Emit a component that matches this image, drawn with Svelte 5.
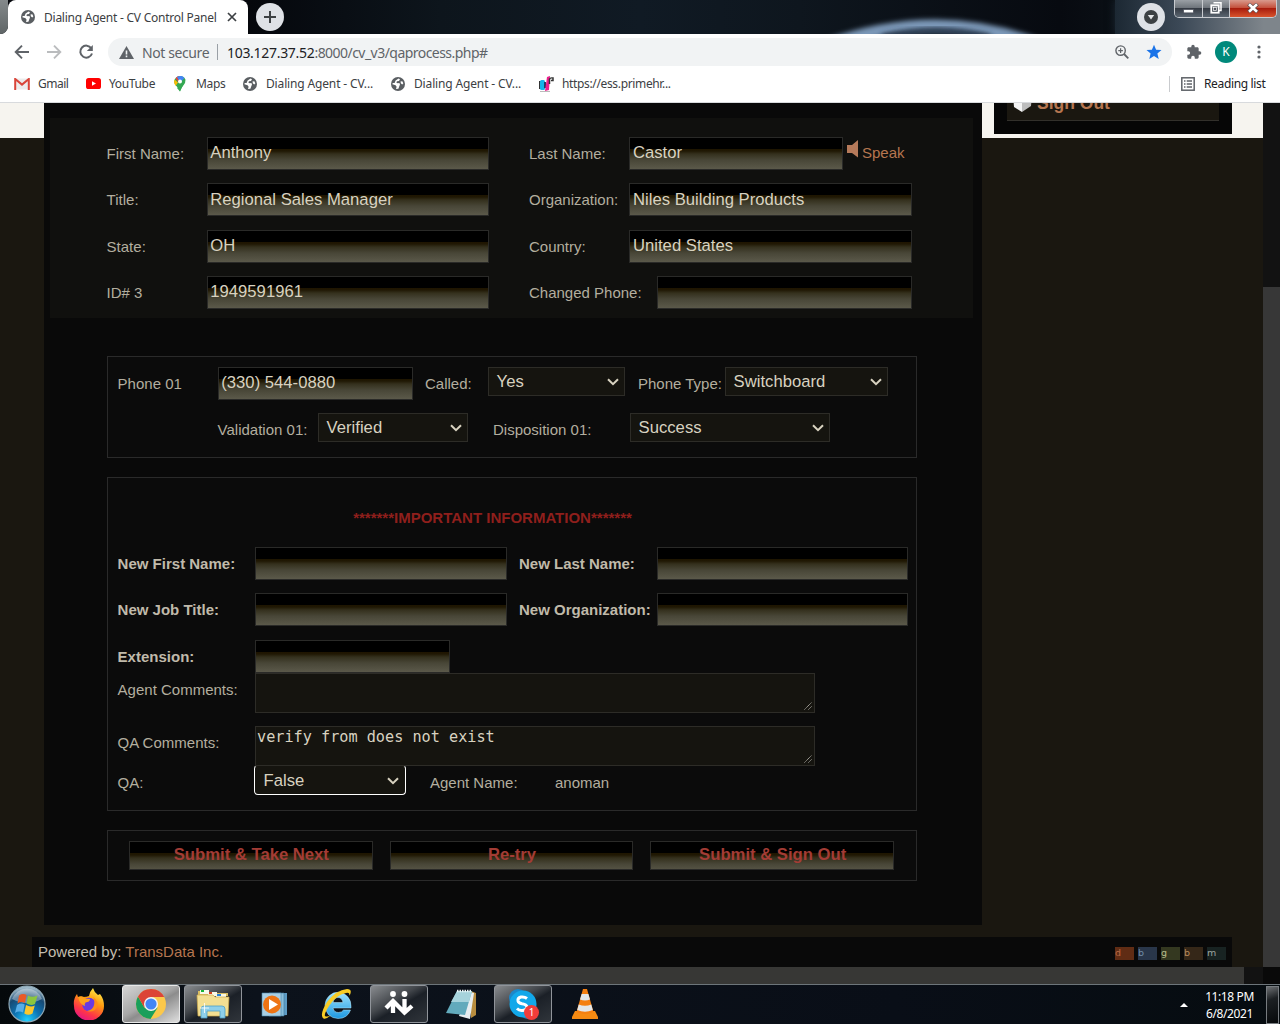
<script>
  const swatches = [
    { key: 'd', cls: 'sw-d' },
    { key: 'b', cls: 'sw-b' },
    { key: 'g', cls: 'sw-g' },
    { key: 'b', cls: 'sw-w' },
    { key: 'm', cls: 'sw-m' }
  ];
</script>

{#snippet globe()}
  <svg class="globe" viewBox="0 0 14 14" width="14" height="14">
    <circle cx="7" cy="7" r="7" fill="#5a5e62" />
    <path d="M7.5 1.6 9 2.2 8 4 6 4.3 5.3 5.6 6.6 6.2 8.4 6 9 7.6 8.300 9.200 7.400 11.800 5 12 5.600 9.800 4.600 8.300 1.400 7.300 1.700 6.100 3.600 5.900 4.600 3.600Z" fill="#fff" />
    <path d="M9.600 4.200 11.600 4.600 12.300 6.600 11.200 7.400 9.800 6.200Z" fill="#fff" />
  </svg>
{/snippet}

{#snippet field(text)}
  <div class="field">{text}</div>
{/snippet}

{#snippet select(text)}
  <div class="select">
    <span>{text}</span>
    <svg width="12" height="8" viewBox="0 0 12 8"><path d="M1 1.2 6 6.2 11 1.2" fill="none" stroke="#d8d2c0" stroke-width="2" /></svg>
  </div>
{/snippet}

{#snippet area(text)}
  <div class="area">
    <span>{text}</span>
    <svg width="8" height="8" viewBox="0 0 8 8"><path d="M.5 7.5 7.5.5M4.5 7.5 7.5 4.5" stroke="#b5b2aa" stroke-width="1" stroke-dasharray="1.2 .5" /></svg>
  </div>
{/snippet}

<div class="screen">
  <header class="tabs">
    <div class="edge"></div>
    <div class="tab">
      {@render globe()}
      <span class="tab-title">Dialing Agent - CV Control Panel</span>
      <svg width="10" height="10" viewBox="0 0 10 10"><path d="M1 1 9 9M9 1 1 9" stroke="#3c4043" stroke-width="1.7" /></svg>
    </div>
    <div class="round plus">
      <svg width="14" height="14" viewBox="0 0 14 14"><path d="M7 1V13M1 7H13" stroke="#3c4043" stroke-width="2" /></svg>
    </div>
    <svg class="arc" width="240" height="34" viewBox="0 0 240 34">
      <defs><filter id="soft" x="-20%" y="-60%" width="140%" height="220%"><feGaussianBlur stdDeviation="2.8" /></filter></defs>
      <path d="M5 46Q117 5 222 46" fill="none" stroke="#7c98b8" stroke-width="12" filter="url(#soft)" />
      <path d="M62 37Q117 24 170 37" fill="none" stroke="#2a3b50" stroke-width="6" filter="url(#soft)" />
    </svg>
    <div class="glass">
      <div class="round media">
        <svg width="14" height="14" viewBox="0 0 14 14"><circle cx="7" cy="7" r="7" fill="#3c4043" /><path d="M3.8 5H10.2L7 9.4Z" fill="#e4e6e8" /></svg>
      </div>
      <div class="winctl">
        <div class="wc"><svg width="12" height="6" viewBox="0 0 12 6"><rect x=".5" y="1.5" width="10" height="3.4" fill="#fff" stroke="#4e535e" stroke-width=".8" /></svg></div>
        <div class="wc mid"><svg width="12" height="12" viewBox="0 0 12 12"><path d="M3.5.8H11V8.5H9" fill="none" stroke="#fff" stroke-width="1.5" /><rect x="1.3" y="3.3" width="7.4" height="7.4" fill="none" stroke="#fff" stroke-width="1.8" /><rect x="3.6" y="5.6" width="2.8" height="2.8" fill="#50555f" stroke="#fff" stroke-width=".7" /></svg></div>
        <div class="wc close"><svg width="12" height="10" viewBox="0 0 12 10"><path d="M1.5 1 10.5 9M10.5 1 1.5 9" stroke="#5b4a4c" stroke-width="4" /><path d="M2 1.2 10 8.8M10 1.2 2 8.8" stroke="#fff" stroke-width="2.6" /></svg></div>
      </div>
    </div>
  </header>

  <div class="toolbar">
    <svg width="16" height="16" viewBox="0 0 16 16"><path d="M15 8H2M8 1.7 1.7 8 8 14.3" fill="none" stroke="#5f6368" stroke-width="1.9" /></svg>
    <svg width="16" height="16" viewBox="0 0 16 16"><path d="M1 8H14M8 1.7 14.3 8 8 14.3" fill="none" stroke="#babcbe" stroke-width="1.9" /></svg>
    <svg width="16" height="16" viewBox="0 0 16 16"><path d="M13.3 4.3A6 6 0 1 0 14 9.5" fill="none" stroke="#5f6368" stroke-width="2" /><path d="M14.8 1V7H8.8Z" fill="#5f6368" /></svg>
    <div class="omni">
      <svg width="15" height="13" viewBox="0 0 15 13"><path d="M7.5 0 15 13H0Z" fill="#5f6368" /><path d="M7.5 4.5V8.5M7.5 9.6V11.3" stroke="#f1f3f4" stroke-width="1.6" /></svg>
      <span class="insecure">Not secure</span>
      <span class="bar"></span>
      <span class="url"><b>103.127.37.52</b>:8000/cv_v3/qaprocess.php#</span>
      <svg class="zoom" width="14" height="14" viewBox="0 0 14 14"><circle cx="5.6" cy="5.6" r="4.7" fill="none" stroke="#5f6368" stroke-width="1.4" /><path d="M9 9 13.3 13.3" stroke="#5f6368" stroke-width="1.8" /><path d="M3.3 5.6H7.9M5.6 3.3V7.9" stroke="#5f6368" stroke-width="1.2" /></svg>
      <svg width="16" height="16" viewBox="0 0 16 16"><path d="M8 .7 10.1 5.7 15.5 6.1 11.4 9.6 12.7 15 8 12.1 3.3 15 4.6 9.6.5 6.1 5.9 5.7Z" fill="#1a73e8" /></svg>
    </div>
    <svg class="puzzle" width="16" height="16" viewBox="0 0 24 24"><path d="M20.500 11H19V7C19 5.900 18.100 5 17 5H13V3.500A2.500 2.500 0 0 0 8 3.500V5H4C2.900 5 2 5.900 2 7V10.800H3.500A2.700 2.700 0 0 1 3.500 16.200H2V20C2 21.100 2.900 22 4 22H7.800V20.500A2.700 2.700 0 0 1 13.200 20.500V22H17C18.100 22 19 21.100 19 20V16H20.500A2.500 2.500 0 0 0 20.500 11Z" fill="#5f6368" /></svg>
    <div class="avatar">K</div>
    <svg width="4" height="14" viewBox="0 0 4 14"><g fill="#5f6368"><circle cx="2" cy="2" r="1.6" /><circle cx="2" cy="7" r="1.6" /><circle cx="2" cy="12" r="1.6" /></g></svg>
  </div>

  <nav class="marks">
    <div class="mk m1">
      <svg width="16" height="12" viewBox="0 0 16 12"><path d="M1 .5H15V11.5H1Z" fill="#ececec" /><path d="M1.2 12V1L8 6.6 14.8 1V12" fill="none" stroke="#d9453a" stroke-width="2" /></svg>
      <span>Gmail</span>
    </div>
    <div class="mk m2">
      <svg width="15" height="11" viewBox="0 0 15 11"><rect width="15" height="11" rx="2.6" fill="#f00" /><path d="M6 3.2 10 5.5 6 7.8Z" fill="#fff" /></svg>
      <span>YouTube</span>
    </div>
    <div class="mk m3">
      <svg width="12" height="16" viewBox="0 0 12 16"><path d="M6 0A6 6 0 0 1 11.6 4L6 15.6C5.3 12 .2 9.500 .2 5.600A5.800 5.800 0 0 1 6 0Z" fill="#34a853" /><path d="M.6 3.500 4 6.500 1.700 9.700C-.2 7.500 0 5 .6 3.500Z" fill="#fbbc04" /><path d="M1.500 2.200A5.600 5.600 0 0 1 6 0L7.800 4 4.200 6Z" fill="#ea4335" /><path d="M3 1A5.800 5.800 0 0 1 10.500 2L6 6.500Z" fill="#4285f4" /><path d="M3 12 11 4.500C12.500 8 7 10 6 15.600Z" fill="#34a853" /><circle cx="6" cy="5.600" r="2" fill="#fff" /></svg>
      <span>Maps</span>
    </div>
    <div class="mk m4">{@render globe()}<span>Dialing Agent - CV...</span></div>
    <div class="mk m5">{@render globe()}<span>Dialing Agent - CV...</span></div>
    <div class="mk m6">
      <svg width="15" height="16" viewBox="0 0 15 16"><path d="M0 5H2V13H0Z" fill="#333" /><rect x="1" y="4" width="5" height="10" rx="1.500" fill="#12b5ea" /><path d="M5 6H7V12H5Z" fill="#263c66" /><path d="M8 1 11 0 10 14 6 15 7 8Z" fill="#ec1e8c" /><path d="M10.500 8V3Q11 1.500 14 2V4.500H12" fill="none" stroke="#333" stroke-width="1.500" /><path d="M1 15.500H11" stroke="#bbb" /></svg>
      <span>https://ess.primehr...</span>
    </div>
    <div class="mk reading">
      <svg width="14" height="14" viewBox="0 0 14 14"><rect x=".8" y=".8" width="12.400" height="12.400" fill="none" stroke="#5f6368" stroke-width="1.500" /><path d="M3 4H4.500M3 7H4.500M3 10H4.500M5.700 4H11M5.700 7H11M5.700 10H11" stroke="#5f6368" stroke-width="1.400" /></svg>
      <span>Reading list</span>
    </div>
  </nav>

  <div class="view">
    <div class="page">
      <div class="cols">
        <main>
          <section class="contact">
            <div class="row wide">
              <label>First Name:</label>{@render field('Anthony')}
              <label class="c4">Last Name:</label>{@render field('Castor')}
              <div class="speak">
                <svg width="12" height="18" viewBox="0 0 12 18"><path d="M0 5H5L11 0V17.500L5 13H0Z" fill="#b67a5a" /></svg>
                <span>Speak</span>
              </div>
            </div>
            <div class="row org title">
              <label>Title:</label>{@render field('Regional Sales Manager')}
              <label class="c4">Organization:</label>{@render field('Niles Building Products')}
            </div>
            <div class="row org short">
              <label>State:</label>{@render field('OH')}
              <label class="c4">Country:</label>{@render field('United States')}
            </div>
            <div class="row changed short">
              <label>ID# 3</label>{@render field('1949591961')}
              <label class="c4">Changed Phone:</label>{@render field('')}
            </div>
          </section>

          <section class="box phone">
            <div class="row ph1">
              <label>Phone 01</label>{@render field('(330) 544-0880')}
              <label class="c4">Called:</label>{@render select('Yes')}
              <label class="c7">Phone Type:</label>{@render select('Switchboard')}
            </div>
            <div class="row ph2">
              <label>Validation 01:</label>{@render select('Verified')}
              <label class="c4">Disposition 01:</label>{@render select('Success')}
            </div>
          </section>

          <section class="box info">
            <h2>*******IMPORTANT INFORMATION*******</h2>
            <div class="row nw bold">
              <label>New First Name:</label>{@render field('')}
              <label class="c4">New Last Name:</label>{@render field('')}
            </div>
            <div class="row nw bold">
              <label>New Job Title:</label>{@render field('')}
              <label class="c4">New Organization:</label>{@render field('')}
            </div>
            <div class="row ext short bold">
              <label>Extension:</label>{@render field('')}
            </div>
            <div class="row comments first"><label>Agent Comments:</label>{@render area('')}</div>
            <div class="row comments"><label>QA Comments:</label>{@render area('verify from does not exist')}</div>
            <div class="row qa">
              <label>QA:</label>{@render select('False')}
              <label class="c4">Agent Name:</label><label>anoman</label>
            </div>
          </section>

          <section class="box actions">
            <div class="btn">Submit &amp; Take Next</div>
            <div class="btn">Re-try</div>
            <div class="btn">Submit &amp; Sign Out</div>
          </section>
        </main>
        <aside>
          <div class="signout">
            <svg width="22" height="20" viewBox="0 0 22 20"><path d="M1 2 10 6V19L2 14Z" fill="#f4f4f4" /><path d="M10 6 20 2 19 13 10 19Z" fill="#bdbdbd" /><path d="M1 2 11 0 20 2 10 6Z" fill="#e2e2e2" /></svg>
            <span>Sign Out</span>
          </div>
        </aside>
      </div>
      <footer>
        <span>Powered by: <em>TransData Inc.</em></span>
        <div class="swatches">
          {#each swatches as s}<i class={s.cls}>{s.key}</i>{/each}
        </div>
      </footer>
    </div>
    <div class="vscroll"><div></div></div>
  </div>
  <div class="hscroll"><div class="thumb"></div><div class="track"></div></div>

  <div class="taskbar">
    <div class="start">
      <svg width="40" height="38" viewBox="0 0 40 38">
        <defs>
          <radialGradient id="orb" cx=".5" cy=".95" r=".9"><stop offset="0" stop-color="#1fd0ff" /><stop offset=".4" stop-color="#0d74b4" /><stop offset=".75" stop-color="#174a74" /><stop offset="1" stop-color="#9db8c8" /></radialGradient>
        </defs>
        <circle cx="20" cy="19" r="18" fill="url(#orb)" stroke="#8fa9b6" stroke-width="1.200" />
        <path d="M5 14A16 16 0 0 1 35 14Q20 22 5 14Z" fill="#fff" opacity=".35" />
        <path d="M12 10.500Q16 8 19.500 10L18 18Q14 16 10.500 18.500Z" fill="#ea5a27" />
        <path d="M21 10.500Q25 13 30.500 10.500L28 19Q24 21 19.500 18.500Z" fill="#8cc63e" />
        <path d="M10 20Q14 17.500 17.700 19.500L16 27.500Q12 25.500 8 28Z" fill="#58aee8" />
        <path d="M19 20Q23.500 22.500 27.800 20.500L25.500 28.500Q21.500 31 17.300 28.500Z" fill="#fcc72c" />
      </svg>
    </div>
    <div class="app">
      <svg width="32" height="32" viewBox="0 0 32 32">
        <defs><linearGradient id="ff" x1=".8" y1="0" x2=".3" y2="1"><stop offset="0" stop-color="#fff44f" /><stop offset=".4" stop-color="#ff980e" /><stop offset=".75" stop-color="#ff3647" /><stop offset="1" stop-color="#e31587" /></linearGradient></defs>
        <path d="M20 0Q21 4 25 7L27 6Q31 11 31 18A15 14.500 0 0 1 1 18Q0 11 4 6L5 9Q8 8 10 9Q14 9 16 8Q17 3 20 0Z" fill="url(#ff)" />
        <circle cx="16" cy="16.500" r="6.800" fill="#6a3ae0" />
        <path d="M5 9Q10 7 12 10.500L17 11Q17 14 12.500 14.500Q11 16 12 18Q7 17 5 9Z" fill="#ffa01c" />
        <path d="M20 9Q26 13 24 19Q21 25 14 23Q20 22 21 17Q22 12 20 9Z" fill="#ff8c17" />
      </svg>
    </div>
    <div class="app on active">
      <svg width="32" height="32" viewBox="0 0 32 32">
        <circle cx="16" cy="16" r="15" fill="#fbc84b" />
        <path d="M3 8.500A15 15 0 0 0 15.500 31L22.500 19.700 16 16 9.500 19.700Z" fill="#1a9f5b" />
        <path d="M3 8.500A15 15 0 0 1 29.200 9H16L9.500 19.700Z" fill="#dc4437" />
        <circle cx="16" cy="16" r="7" fill="#f4f4f4" /><circle cx="16" cy="16" r="5.600" fill="#4286f5" />
      </svg>
    </div>
    <div class="app on">
      <svg width="34" height="32" viewBox="0 0 34 32">
        <path d="M2 3H10L12 5H32V8H2Z" fill="#d9bd62" /><rect x="4" y="2" width="9" height="4" fill="#f8f8e8" /><rect x="5" y="2" width="3" height="2" fill="#15b536" />
        <rect x="12" y="4" width="9" height="4" fill="#f8f8e8" /><rect x="13" y="4" width="3" height="2" fill="#d2401f" /><rect x="20" y="6" width="10" height="4" fill="#f8f8e8" /><rect x="21" y="6" width="4" height="2" fill="#2480da" />
        <path d="M1 7H17L19 9H33L32 28H2Z" fill="#f3df92" stroke="#cda94a" stroke-width=".7" />
        <path d="M5 30V21Q5 18 8 18H26Q29 18 29 21V30H24V23H11V30Z" fill="#8fd0ea" stroke="#4c9fc7" stroke-width=".8" />
        <path d="M8.500 15V25M4 20H13" stroke="#fff" stroke-width=".8" />
      </svg>
    </div>
    <div class="app">
      <svg width="28" height="28" viewBox="0 0 28 28">
        <path d="M12 3H26V25L12 26Z" fill="#5d9bc4" /><path d="M8 3H23V26H8Z" fill="#89bedb" stroke="#3e789d" stroke-width=".6" /><path d="M1 3H20V26H1Z" fill="#a9cfe4" stroke="#4c87ab" stroke-width=".6" />
        <circle cx="11" cy="14.500" r="9" fill="#ee7414" /><path d="M8 9 17 14.500 8 20Z" fill="#fff" />
      </svg>
    </div>
    <div class="app">
      <svg width="34" height="32" viewBox="0 0 34 32">
        <defs><linearGradient id="ie" x1="0" y1="0" x2="0" y2="1"><stop offset="0" stop-color="#9ee4ff" /><stop offset="1" stop-color="#1c97e0" /></linearGradient></defs>
        <path d="M5 17A13 13.500 0 0 1 31 18.500V20H13Q14 24.500 18.500 24.500Q22 24.500 23.500 22H30.500Q27.500 30.500 18 30.500Q6 30 5 17ZM13 14.500H23Q22 9.500 18 9.500Q14 9.500 13 14.500Z" fill="url(#ie)" stroke="#b7eaff" stroke-width=".5" />
        <path d="M3.500 30.500Q-1 27 7 14Q16 2 27 1Q33 1 29.500 8Q30 4 26 5Q16 7 9 18Q4 26 5 28Q7 29.500 11 27Q6.500 31.500 3.500 30.500Z" fill="#f8cc25" />
      </svg>
    </div>
    <div class="app on">
      <svg width="30" height="28" viewBox="0 0 30 28">
        <circle cx="9" cy="4" r="2.900" fill="#fff" /><circle cx="20.500" cy="4" r="2.900" fill="#fff" />
        <path d="M2 18 9 11 20.500 22.500 28 16M9 11V23M20.500 9V22.500" fill="none" stroke="#fff" stroke-width="4.300" />
      </svg>
    </div>
    <div class="app">
      <svg width="32" height="32" viewBox="0 0 32 32">
        <path d="M26 3 31 5V27L26 30Z" fill="#b78c3e" /><path d="M22 3 29 5 25 31 14 28Z" fill="#e7edf0" />
        <path d="M12 3H27L20 27 1 25Z" fill="#62aabc" /><path d="M12 3H27L24 14 6 14Z" fill="#a6d3dc" /><path d="M12 3H27" stroke="#e9f2f4" stroke-width="2.500" stroke-dasharray="1.500 1" />
      </svg>
    </div>
    <div class="app on">
      <svg class="skype" width="32" height="32" viewBox="0 0 32 32">
        <circle cx="11" cy="10" r="9" fill="#1b87c9" /><circle cx="21" cy="22" r="9" fill="#1b87c9" /><circle cx="16" cy="16" r="13.500" fill="#12a8ea" />
        <path d="M20 10.500Q17.500 8.500 14 9Q10.500 10 11 12.800Q11.500 15 15 15.700Q20 16.500 20 19.300Q19 22.800 14.500 22.500Q12 22.500 10 20.500" fill="none" stroke="#fff" stroke-width="3" />
      </svg>
      <span class="badge">1</span>
    </div>
    <div class="app">
      <svg width="28" height="32" viewBox="0 0 28 32">
        <path d="M4 23H24L27 29V31H1V29Z" fill="#f58a12" /><path d="M12 1H16L22.500 24Q14 28 5.500 24Z" fill="#f47f10" />
        <path d="M10.600 6H17.400L19 11.500Q14 13.500 9 11.500Z" fill="#e3e6e8" /><path d="M7.700 16.500Q14 19 20.300 16.500L21.800 22Q14 25.500 6.200 22Z" fill="#e3e6e8" />
      </svg>
    </div>
    <div class="tray">
      <svg width="8" height="4" viewBox="0 0 8 4"><path d="M4 0 8 4H0Z" fill="#fff" /></svg>
      <div class="clock"><span>11:18 PM</span><span>6/8/2021</span></div>
      <div class="peek"></div>
    </div>
  </div>
</div>

<style>
  :global(body) { margin: 0; overflow: hidden; }
  .screen, .screen :global(*) { box-sizing: border-box; }
  .screen { width: 1280px; height: 1024px; display: flex; flex-direction: column; overflow: hidden; font-family: 'Liberation Sans', Arial, sans-serif; }
  svg { display: block; flex: none; }

  .tabs { height: 34px; display: flex; background: linear-gradient(90deg, #05070c 250px, #0d151c 440px, #101a24 640px, #0e161e 800px, #070a10 1060px, #0a0f15 1115px); font-family: 'Noto Sans', sans-serif; overflow: hidden; }
  .edge { width: 8px; background: linear-gradient(#84898b, #5f6566); border-radius: 0 0 8px 0; box-shadow: 0 9px 0 #fff; }
  .tab { width: 240px; background: #fff; border-radius: 8px 8px 0 0; display: flex; align-items: center; padding: 0 11px 0 13px; }
  .tab-title { margin-left: 9px; width: 178px; font-size: 12px; letter-spacing: -0.24px; color: #3c4043; margin-right: 5px; white-space: nowrap; }
  .round { width: 28px; height: 28px; border-radius: 50%; background: #dee1e6; display: grid; place-items: center; }
  .plus { margin: 3px 0 0 8px; }
  .arc { margin-left: 536px; }
  .glass { margin-left: auto; width: 165px; display: flex; background: linear-gradient(90deg, #1c2833, #3c4957 40%, #7e858b 90%); box-shadow: 0 0 8px #1c2833; }
  .media { margin: 3px 0 0 22px; flex: none; }
  .winctl { display: flex; margin-left: 9px; width: 103px; height: 18px; border: 1px solid #c8cbd0; border-top: 0; border-radius: 0 0 5px 5px; overflow: hidden; flex: none; }
  .wc { width: 28px; display: grid; place-items: center; background: linear-gradient(#9a9fa5, #6f757c 45%, #353b44 50%, #5b6570); border-right: 1px solid #c8cbd0; }
  .wc:first-child { padding-top: 4px; }
  .wc.mid { width: 27px; padding-bottom: 1px; }
  .wc.close { flex: 1; border: 0; padding-bottom: 1px; background: linear-gradient(#d99a8d, #c4513d 45%, #a81d0d 50%, #d8532c); }

  .toolbar { height: 36px; background: #fff; display: flex; align-items: center; padding: 0 19px 0 14px; font-family: 'Noto Sans', sans-serif; }
  .toolbar > svg:nth-child(2), .toolbar > svg:nth-child(3) { margin-left: 16px; }
  .omni { margin-left: 14px; width: 1064px; height: 28px; border-radius: 14px; background: #f1f3f4; display: flex; align-items: center; padding: 0 10px 0 11px; font-size: 14px; color: #5f6368; flex: none; }
  .insecure { margin-left: 8px; width: 68px; letter-spacing: -0.4px; white-space: nowrap; }
  .bar { width: 1px; height: 16px; background: #9aa0a6; margin: 0 9px 0 7px; }
  .url { letter-spacing: -0.54px; white-space: nowrap; }
  .url b { font-weight: 400; letter-spacing: -0.3px; color: #202124; }
  .zoom { margin-left: auto; margin-right: 17px; }
  .omni > svg:last-child { margin-right: 0; }
  .puzzle { margin-left: 14px; }
  .avatar { width: 22px; height: 22px; border-radius: 50%; background: #00897b; color: #fff; font-size: 12px; line-height: 22px; text-align: center; margin: 0 auto 0 13px; }

  .marks { height: 33px; background: #fff; border-bottom: 1px solid #d8dadd; display: flex; align-items: center; padding: 0 0 5px 14px; font: 12px 'Noto Sans', sans-serif; color: #3c4043; }
  .mk { display: flex; align-items: center; gap: 8px; height: 16px; white-space: nowrap; letter-spacing: -0.35px; flex: none; }
  .m1 { width: 72px; letter-spacing: -0.5px; }
  .m2 { width: 88px; }
  .m3 { width: 69px; gap: 10px; }
  .m4, .m5 { width: 148px; gap: 9px; letter-spacing: -0.15px; }
  .m6 { gap: 8px; }
  .reading { margin-left: auto; width: 111px; border-left: 1px solid #c9cbce; padding-left: 11px; gap: 9px; color: #202124; }

  .view { height: 864px; display: flex; }
  .page { width: 1263px; background: linear-gradient(#f6f4ef 35px, #1a1710 35px); display: flex; flex-direction: column; }
  .vscroll { width: 17px; background: #121212; padding-top: 184px; }
  .vscroll div { height: 680px; background: #373737; }
  .hscroll { height: 17px; display: flex; background: #090909; }
  .thumb { width: 1244px; background: #373735; }
  .track { width: 19px; background: #121212; }

  .cols { display: flex; align-items: flex-start; height: 834px; padding-left: 44px; }
  main { width: 938px; height: 822px; background: #090909; padding: 15px 9px 0 6px; }
  aside { margin-left: 12px; width: 238px; height: 31px; background: #060606; padding: 0 13px; overflow: hidden; }
  .signout { height: 18px; background: #1a1710; border-bottom: 1px solid #32302b; display: flex; align-items: flex-end; padding-left: 5px; gap: 3px; font-weight: 700; font-size: 17.5px; line-height: 20px; color: #b67650; overflow: hidden; }
  .signout svg { margin-bottom: 7px; }
  .signout span { padding-bottom: 7px; }

  .contact { height: 200px; background: #10100e; padding: 19px 0 0 57px; display: flex; flex-direction: column; gap: 13px; margin-bottom: 38px; }
  .row { display: grid; height: 33px; align-items: start; color: #b3ae9f; font-size: 15px; }
  .row.short { height: 32px; margin-top: 1px; }
  .row > label { line-height: 33px; white-space: nowrap; }
  .row > label:first-child { margin-left: -0.4px; }
  .row.bold { font-weight: 700; color: #c0baaa; }
  .wide { grid-template-columns: 100px 282px 40px 100px 214px 1fr; }
  .org { grid-template-columns: 100px 282px 40px 100px 283px; }
  .changed { grid-template-columns: 100px 282px 40px 128px 255px; }
  .c4 { grid-column: 4; }
  .c7 { grid-column: 7; }
  .field { height: 100%; border: 1px solid #2a2a28; background: linear-gradient(#000 11px, #1f1500 11px, #201804 13px, #34301d 16px, #484637 22px, #5b594a); font-size: 16.67px; line-height: 29px; padding-left: 3px; color: #d8d2c0; white-space: nowrap; min-width: 0; font-weight: 400; }
  .field:nth-child(2) { padding-left: 2.3px; }
  .row.title .field { line-height: 31px; }
  .row.short .field { line-height: 29px; }
  .speak { display: flex; padding-left: 4px; gap: 3px; color: #b67650; }
  .speak svg { margin-top: 3px; }
  .speak span { line-height: 31px; }

  .box { width: 810px; margin-left: 57px; border: 1px solid #2a2a2a; background: #0b0b0b; padding-left: 10px; }
  .phone { height: 102px; padding-top: 10px; display: flex; flex-direction: column; gap: 13px; margin-bottom: 19px; }
  .ph1 { grid-template-columns: 100px 195px 12px 63px 137px 13px 87px 163px; }
  .ph2 { grid-template-columns: 100px 150px 25px 137px 200px; padding-left: 100px; }
  .select { height: 29px; background: #15140f; border: 1px solid #2d2c27; display: flex; align-items: center; justify-content: space-between; padding: 0 5px 0 7.6px; color: #d8d2c0; font-size: 16.67px; }
  .select span { line-height: 27px; }
  .select svg { margin-top: 1px; }

  .info { height: 334px; margin-bottom: 19px; }
  h2 { margin: 0; padding: 30px 39px 0 0; height: 69px; width: 788px; text-align: center; font-size: 15px; line-height: 20px; color: #8f1f1c; }
  .nw { grid-template-columns: 137px 252px 12px 138px 251px; margin-bottom: 13px; }
  .row.ext { grid-template-columns: 137px 195px; margin-top: 14px; }
  .comments { grid-template-columns: 137px 560px; height: 40px; margin-top: 13px; }
  .comments.first { margin-top: 1px; }
  .area { height: 40px; border: 1px solid #2d2c27; background: #15140f; display: flex; justify-content: space-between; padding: 0 2px 2px 1px; font: 15.2px/20px 'DejaVu Sans Mono', monospace; color: #d8d2c0; }
  .area svg { align-self: flex-end; }
  .qa { grid-template-columns: 136px 152px 24px 125px 100px; height: 30px; margin-top: -1px; }
  .qa .select { height: 30px; border: 1px solid #fff; border-radius: 4px; border-top-color: #2d2c27; padding-left: 8.6px; padding-right: 6px; }
  .qa > label { line-height: 35px; }

  .actions { height: 51px; padding: 10px 22px 0 21px; display: flex; gap: 17px; }
  .btn { flex: 1; height: 29px; border: 1px solid #2a2a28; background: linear-gradient(#000 11px, #1f1500 11px, #201804 13px, #34301d 16px, #484637 22px, #545243); color: #a33c35; font-weight: 700; font-size: 16.67px; line-height: 25px; text-align: center; padding-left: 1px; }

  footer { margin-left: 32px; width: 1200px; height: 30px; background: #090909; display: flex; justify-content: space-between; padding: 0 6px 0 6px; font-size: 15px; line-height: 30px; color: #c4beb0; }
  footer em { font-style: normal; color: #b67650; }
  .swatches { display: flex; gap: 4px; padding-top: 10px; }
  .swatches i { width: 19px; height: 13px; font: 9.500px/12px 'DejaVu Sans', sans-serif; }
  .sw-d { background: #602c14; color: #b96a45; }
  .sw-b { background: #29364a; color: #718ba6; }
  .sw-g { background: #343820; color: #b7bd8b; }
  .sw-w { background: #352718; color: #b98a5c; }
  .sw-m { background: #182322; color: #9ba5a0; }

  .taskbar { height: 40px; display: flex; gap: 4px; background: linear-gradient(90deg, #05090b, #0c121b 20%, #090e17 70%, #060c10); border-top: 1px solid #6d757a; font-family: 'Noto Sans', sans-serif; }
  .start { width: 56px; padding-left: 7px; }
  .app { width: 58px; height: 38px; display: grid; place-items: center; border-radius: 3px; position: relative; }
  .app.on { border: 1px solid #90949a; background: linear-gradient(150deg, #898c8f, #43474c 40%, #1b2027 55%, #30353b); }
  .app.active { border-color: #e8e8e8; background: linear-gradient(150deg, #d5d5d5, #a7a7a7 45%, #8d8d8d 55%, #dedede); }
  .badge { position: absolute; left: 29px; top: 19px; width: 15px; height: 15px; border-radius: 50%; background: #f23d3a; color: #fff; font-size: 10px; line-height: 15px; text-align: center; }
  .tray { margin-left: auto; display: flex; align-items: center; color: #fff; font-size: 12px; }
  .clock { width: 78px; margin-left: 2px; display: flex; flex-direction: column; align-items: center; line-height: 17px; letter-spacing: -0.4px; padding-left: 1px; }
  .peek { width: 13px; height: 38px; margin: 0 1px 0 -2px; border: 1px solid #777c80; background: linear-gradient(160deg, #6d7073, #1c2023 35%, #06090b); }
</style>
